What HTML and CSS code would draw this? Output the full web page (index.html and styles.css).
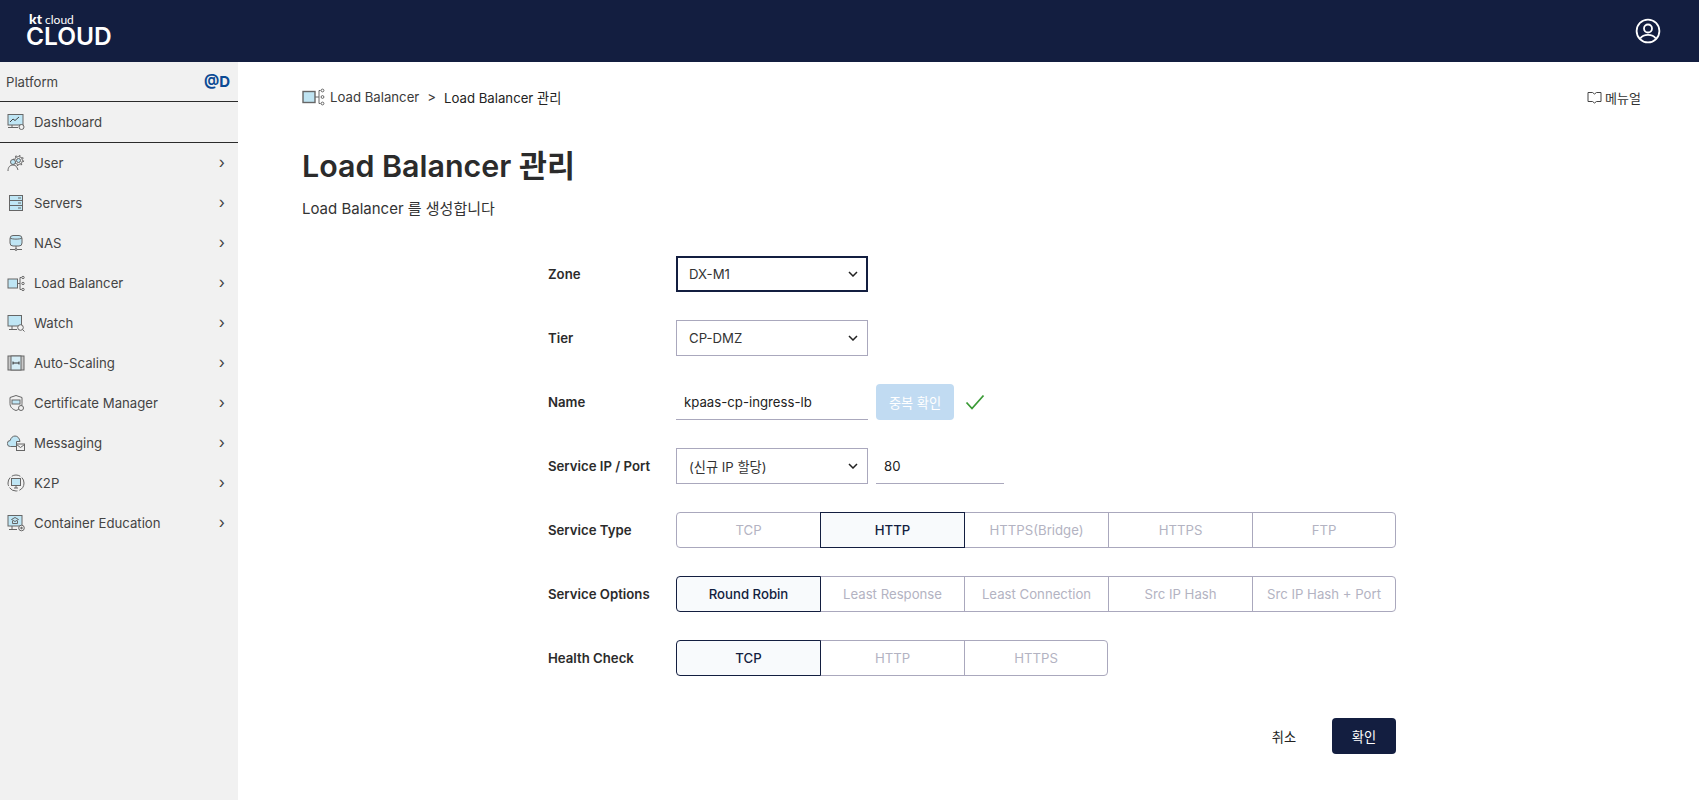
FILE: index.html
```html
<!DOCTYPE html>
<html lang="ko">
<head>
    <meta charset="UTF-8">
    <meta name="viewport" content="width=device-width, initial-scale=1.0">
    <title>Load Balancer 관리</title>
    <link rel="stylesheet" href="styles.css">
</head>
<body>
    <header class="topbar">
        <div class="logo">
            <span class="logo-small"><b>kt</b> cloud</span>
            <span class="logo-big">CLOUD</span>
        </div>
        <svg class="user-icon" width="26" height="26" viewBox="0 0 26 26" fill="none" stroke="#fff" stroke-width="1.8">
            <circle cx="13" cy="13" r="11.4"/>
            <circle cx="13" cy="10.5" r="4"/>
            <path d="M5.2 20.5c1.8-2.6 4.6-3.6 7.8-3.6s6 1 7.8 3.6"/>
        </svg>
    </header>

    <div class="page">
        <nav class="sidebar">
            <div class="side-head">
                <span>Platform</span>
                <b class="side-tag">@D</b>
            </div>
            <a class="side-dash">
                <svg class="side-icon" viewBox="0 0 18 18" fill="none" stroke="#666" stroke-width="1"><rect x="1" y="1.500" width="15" height="10.500" fill="#bfe6f5"/><path d="M3 9l3-3 2 1.500L12 4" stroke="#444"/><path d="M1 14.500h10M5 12v2.500"/><circle cx="14.500" cy="14" r="2.500" fill="#f1f1f1"/></svg>
                Dashboard
            </a>
            <ul class="side-menu">
                <li>
                    <svg class="side-icon" viewBox="0 0 18 18" fill="none" stroke="#666" stroke-width="1"><circle cx="11.500" cy="6.500" r="4" /><circle cx="11.500" cy="6.500" r="5" stroke-width="1.200" stroke-dasharray="1.500 2.400"/><circle cx="11.500" cy="6.500" r="2" fill="#bfe6f5"/><circle cx="6" cy="8" r="2.500" fill="#bfe6f5"/><path d="M1 17c0-4 2-6 5-6s4 2 5 5"/></svg>
                    User <span class="arrow">›</span>
                </li>
                <li>
                    <svg class="side-icon" viewBox="0 0 18 18" fill="#bfe6f5" stroke="#666" stroke-width="1"><rect x="2.500" y="1.500" width="13" height="5"/><rect x="2.500" y="6.500" width="13" height="5"/><rect x="2.500" y="11.500" width="13" height="5"/><path d="M11 4h3M11 9h3M11 14h3"/></svg>
                    Servers <span class="arrow">›</span>
                </li>
                <li>
                    <svg class="side-icon" viewBox="0 0 18 18" fill="none" stroke="#666" stroke-width="1"><rect x="3" y="1.500" width="12" height="10.500" rx="3" fill="#bfe6f5"/><path d="M3 4c2 1.500 10 1.500 12 0M9 12v3M3 15.500h12"/><circle cx="9" cy="15.500" r="1" fill="#f1f1f1"/></svg>
                    NAS <span class="arrow">›</span>
                </li>
                <li>
                    <svg class="side-icon" viewBox="0 0 18 18" fill="none" stroke="#666" stroke-width="1"><rect x="1" y="5" width="9.500" height="9" fill="#bfe6f5"/><path d="M10.500 9.500h2.500M13 3.500h1.500M13 3.500v12h1.500"/><circle cx="16" cy="3.500" r="1.200"/><circle cx="16" cy="9.500" r="1.200"/><circle cx="16" cy="15.500" r="1.200"/></svg>
                    Load Balancer <span class="arrow">›</span>
                </li>
                <li>
                    <svg class="side-icon" viewBox="0 0 18 18" fill="none" stroke="#666" stroke-width="1"><rect x="1" y="1.500" width="13.500" height="10.500" fill="#bfe6f5"/><path d="M5 12v3M2 15.500h8"/><circle cx="13.500" cy="13.500" r="2.800" fill="#f1f1f1"/><path d="M15.500 15.500l2 2"/></svg>
                    Watch <span class="arrow">›</span>
                </li>
                <li>
                    <svg class="side-icon" viewBox="0 0 18 18" fill="none" stroke="#666" stroke-width="1"><rect x="1" y="2" width="16" height="14" fill="#c9c9c9"/><rect x="4" y="2" width="10" height="14" fill="#d5edf6"/><path d="M6 9h6M6 7.500v3M12 7.500v3" stroke="#333"/></svg>
                    Auto-Scaling <span class="arrow">›</span>
                </li>
                <li>
                    <svg class="side-icon" viewBox="0 0 18 18" fill="none" stroke="#666" stroke-width="1"><path d="M9 1.500l6 2v6c0 4-3 6-6 7-3-1-6-3-6-7v-6z" fill="#f1f1f1"/><rect x="5" y="6" width="8" height="4" fill="#bfe6f5"/><circle cx="14" cy="14" r="2.500" fill="#f1f1f1"/></svg>
                    Certificate Manager <span class="arrow">›</span>
                </li>
                <li>
                    <svg class="side-icon" viewBox="0 0 18 18" fill="none" stroke="#666" stroke-width="1"><path d="M3.500 12.500a3 3 0 0 1-.3-6C3.800 3.700 6 2 8 2c2.500 0 4.500 2 5 5.500H9.500v5z" fill="#bfe6f5"/><rect x="9.500" y="10" width="8" height="6.500" fill="#f1f1f1"/><path d="M9.500 10.500l4 3 4-3"/></svg>
                    Messaging <span class="arrow">›</span>
                </li>
                <li>
                    <svg class="side-icon" viewBox="0 0 18 18" fill="none" stroke="#666" stroke-width="1"><circle cx="9" cy="9" r="8" stroke-dasharray="9 2"/><rect x="4.500" y="4.500" width="9" height="7" fill="#bfe6f5"/><path d="M7 14h4M9 11.500V14"/></svg>
                    K2P <span class="arrow">›</span>
                </li>
                <li>
                    <svg class="side-icon" viewBox="0 0 18 18" fill="none" stroke="#666" stroke-width="1"><rect x="1" y="1.500" width="14" height="10.500" fill="#bfe6f5"/><path d="M4.500 5.500L8 3.500l3.500 2L8 7.500zM5.500 7v2.500h5V7M5 12v3M2 15.500h8"/><circle cx="14.500" cy="14" r="2.800" fill="#f1f1f1"/><circle cx="14.500" cy="14" r=".8" fill="#555"/></svg>
                    Container Education <span class="arrow">›</span>
                </li>
            </ul>
        </nav>

        <main class="content">
            <div class="top-row">
                <div class="breadcrumb">
                    <svg width="24" height="18" viewBox="0 0 24 18" fill="none" stroke="#666" stroke-width="1"><rect x="1" y="3.500" width="12" height="11" fill="#bfe4f2" stroke-width="1.400"/><path d="M13 9h4M17 2.500h1.500M17 2.500v13h1.500"/><circle cx="20.500" cy="2.500" r="1.400"/><circle cx="20.500" cy="9" r="1.400"/><circle cx="20.500" cy="15.500" r="1.400"/></svg>
                    <span>Load Balancer</span>
                    <span class="crumb-sep">&gt;</span>
                    <span class="crumb-now">Load Balancer 관리</span>
                </div>
                <a class="manual">
                    <svg width="15" height="13" viewBox="0 0 15 13" fill="none" stroke="#444" stroke-width="1"><path d="M1 1.500h4.500l2 1.500 2-1.500H14v9H9.500l-2 1.500-2-1.500H1z"/></svg>
                    메뉴얼
                </a>
            </div>

            <h1>Load Balancer 관리</h1>
            <p class="desc">Load Balancer 를 생성합니다</p>

            <form class="lb-form">
                <div class="form-row">
                    <label>Zone</label>
                    <div class="select-box focused">
                        DX-M1
                        <svg class="chev" width="10" height="6" viewBox="0 0 10 6" fill="none" stroke="#222" stroke-width="1.500"><path d="M1 1l4 4 4-4"/></svg>
                    </div>
                </div>
                <div class="form-row">
                    <label>Tier</label>
                    <div class="select-box">
                        CP-DMZ
                        <svg class="chev" width="10" height="6" viewBox="0 0 10 6" fill="none" stroke="#222" stroke-width="1.500"><path d="M1 1l4 4 4-4"/></svg>
                    </div>
                </div>
                <div class="form-row">
                    <label>Name</label>
                    <input class="line-input name-input" type="text" value="kpaas-cp-ingress-lb">
                    <button type="button" class="dup-btn">중복 확인</button>
                    <svg class="check" width="20" height="16" viewBox="0 0 20 16" fill="none" stroke="#3a9a35" stroke-width="1.800"><path d="M1.500 8.500l5.500 6L18.500 1.500"/></svg>
                </div>
                <div class="form-row">
                    <label>Service IP / Port</label>
                    <div class="select-box">
                        (신규 IP 할당)
                        <svg class="chev" width="10" height="6" viewBox="0 0 10 6" fill="none" stroke="#222" stroke-width="1.500"><path d="M1 1l4 4 4-4"/></svg>
                    </div>
                    <input class="line-input port-input" type="text" value="80">
                </div>
                <div class="form-row">
                    <label>Service Type</label>
                    <div class="seg">
                        <span>TCP</span>
                        <span class="on">HTTP</span>
                        <span>HTTPS(Bridge)</span>
                        <span>HTTPS</span>
                        <span>FTP</span>
                    </div>
                </div>
                <div class="form-row">
                    <label>Service Options</label>
                    <div class="seg">
                        <span class="on">Round Robin</span>
                        <span>Least Response</span>
                        <span>Least Connection</span>
                        <span>Src IP Hash</span>
                        <span>Src IP Hash + Port</span>
                    </div>
                </div>
                <div class="form-row">
                    <label>Health Check</label>
                    <div class="seg">
                        <span class="on">TCP</span>
                        <span>HTTP</span>
                        <span>HTTPS</span>
                    </div>
                </div>
                <div class="form-actions">
                    <button type="button" class="btn-cancel">취소</button>
                    <button type="button" class="btn-ok">확인</button>
                </div>
            </form>
        </main>
    </div>
</body>
</html>
```

FILE: styles.css
```css
* {
    box-sizing: border-box;
}

body {
    margin: 0;
    font-family: Inter, "Noto Sans CJK KR", sans-serif;
    font-size: 13.2px;
    color: #2b2b2b;
    background-color: #fff;
}

.topbar {
    height: 62px;
    background-color: #131e40;
    display: flex;
    align-items: center;
    justify-content: space-between;
    padding: 0 38px 0 26px;
}

.logo {
    display: flex;
    flex-direction: column;
    color: #fff;
    padding-bottom: 4px;
}

.logo-small {
    font-family: Lato, sans-serif;
    font-size: 12px;
    line-height: 13px;
    padding-left: 3px;
}

.logo-small b {
    font-size: 14px;
    font-weight: 900;
}

.logo-big {
    font-family: Inter, sans-serif;
    font-size: 24.5px;
    font-weight: 600;
    line-height: 21px;
}

.page {
    display: flex;
    min-height: 738px;
}

.sidebar {
    width: 238px;
    flex-shrink: 0;
    background-color: #f1f1f1;
    color: #444;
}

.side-head {
    height: 40px;
    padding: 0 8px 0 6px;
    display: flex;
    align-items: center;
    justify-content: space-between;
    border-bottom: 1px solid #2b2b2b;
}

.side-tag {
    font-size: 15px;
    color: #0b4a94;
}

.side-dash {
    height: 41px;
    display: flex;
    align-items: center;
    padding-left: 7px;
    gap: 9px;
    border-bottom: 1px solid #2b2b2b;
}

.side-icon {
    width: 18px;
    height: 18px;
    flex-shrink: 0;
}

.side-menu {
    list-style: none;
    margin: 0;
    padding: 0;
}

.side-menu li {
    height: 40px;
    display: flex;
    align-items: center;
    padding: 0 13px 0 7px;
    gap: 9px;
}

.arrow {
    margin-left: auto;
    font-size: 16px;
    line-height: 1;
    padding-bottom: 2px;
}

.content {
    flex: 1;
    padding: 26px 58px 0 64px;
}

.top-row {
    display: flex;
    align-items: center;
    justify-content: space-between;
    height: 18px;
}

.breadcrumb {
    display: flex;
    align-items: center;
    color: #3a3a3a;
}

.breadcrumb svg {
    margin-right: 4px;
}

.crumb-sep {
    margin: 0 8px;
}

.crumb-now {
    color: #222;
}

.manual {
    display: flex;
    align-items: center;
    gap: 3px;
    font-size: 13px;
    color: #333;
}

h1 {
    margin: 40px 0 0;
    font-size: 30.4px;
    line-height: 40px;
    font-weight: 600;
    color: #2b2b2b;
}

.desc {
    margin: 13px 0 0;
    font-size: 15px;
    line-height: 20px;
    color: #333;
}

.lb-form {
    margin: 37px 0 0 246px;
    width: 848px;
}

.form-row {
    display: flex;
    align-items: center;
    height: 36px;
    margin-bottom: 28px;
}

.form-row label {
    width: 128px;
    flex-shrink: 0;
    font-weight: 600;
    color: #2b2b2b;
}

.select-box {
    width: 192px;
    height: 36px;
    padding: 0 12px;
    display: flex;
    align-items: center;
    justify-content: space-between;
    border: 1px solid #aaa8bd;
    color: #333;
    background-color: #fff;
}

.select-box.focused {
    border: 2px solid #131e40;
    padding: 0 11px;
}

.chev {
    margin-right: -3px;
}

.line-input {
    height: 36px;
    border: none;
    border-bottom: 1px solid #aaa8bd;
    font: inherit;
    color: #222;
    outline: none;
    padding: 0 8px;
}

.name-input {
    width: 192px;
}

.port-input {
    width: 128px;
    margin-left: 8px;
}

.dup-btn {
    width: 78px;
    height: 36px;
    margin-left: 8px;
    border: none;
    border-radius: 4px;
    background-color: #c1dbf2;
    color: #fff;
    font: inherit;
}

.check {
    margin-left: 11px;
}

.seg {
    display: flex;
}

.seg span {
    width: 145px;
    height: 36px;
    margin-left: -1px;
    display: flex;
    align-items: center;
    justify-content: center;
    border: 1px solid #aaa8bd;
    color: #b3b3c2;
    white-space: nowrap;
}

.seg span:first-child {
    margin-left: 0;
    border-radius: 4px 0 0 4px;
}

.seg span:last-child {
    width: 144px;
    border-radius: 0 4px 4px 0;
}

.seg span.on {
    position: relative;
    z-index: 1;
    border-color: #131e40;
    background-color: #f8fafc;
    color: #131e40;
    font-weight: 500;
}

.form-actions {
    display: flex;
    justify-content: flex-end;
    align-items: center;
    margin-top: 42px;
    gap: 16px;
}

.btn-cancel,
.btn-ok {
    width: 64px;
    height: 36px;
    border: none;
    border-radius: 4px;
    font: inherit;
}

.btn-cancel {
    background: none;
    color: #222;
}

.btn-ok {
    background-color: #131e40;
    color: #fff;
}
```
